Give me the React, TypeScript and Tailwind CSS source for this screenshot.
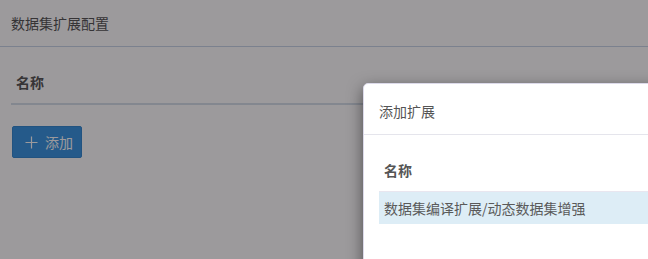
import React from "react";

const font = { fontFamily: '"Noto Sans CJK SC", "Noto Sans", sans-serif' };

function PlusIcon() {
  return (
    <svg width="13" height="13" viewBox="0 0 13 13" className="block">
      <path d="M6.5 0.5v12M0.5 6.5h12" stroke="currentColor" strokeWidth="1.2" fill="none" />
    </svg>
  );
}

export default function App() {
  return (
    <div className="relative w-full h-[259px] overflow-hidden bg-white text-[14px]" style={font}>
      {/* page */}
      <div className="h-[47px] border-b border-[#c9d6e8] flex items-center px-[11px] text-[#555]">
        <span className="leading-[20px]">数据集扩展配置</span>
      </div>
      <div className="pt-[15px] px-[11px]">
        <div className="border-b-2 border-[#d6dfea]">
          <div className="px-[5px] py-[10px] leading-[21px] font-bold text-[#555]">名称</div>
        </div>
        <button className="mt-[21px] ml-[1px] w-[70px] h-[32px] rounded-[2px] bg-[#3a95e2] border border-[#3589d1] text-white flex items-center pl-[12px] gap-[7px]">
          <PlusIcon />
          <span className="leading-[20px]">添加</span>
        </button>
      </div>

      {/* backdrop */}
      <div className="absolute inset-0 bg-[#080308]/40" />

      {/* modal */}
      <div className="absolute left-[363px] top-[83px] w-[600px] h-[300px] bg-white rounded-[5px] border border-[#dcdaea] shadow-[0_5px_15px_rgba(0,0,0,0.5)]">
        <div className="border-b border-[#e5e5ec] pl-[15px] pr-[16px] pt-[17px] pb-[13px] leading-[20px] text-[#555]">添加扩展</div>
        <div className="pt-[15px] pl-[15px]">
          <div className="px-[5px] py-[10px] leading-[21px] font-bold text-[#555]">名称</div>
          <div className="border-t border-[#e8e6ef] bg-[#ddedf6] px-[5px] py-[6px] leading-[20px] text-[#5a5a5a]">
            数据集编译扩展/动态数据集增强
          </div>
        </div>
      </div>
    </div>
  );
}
